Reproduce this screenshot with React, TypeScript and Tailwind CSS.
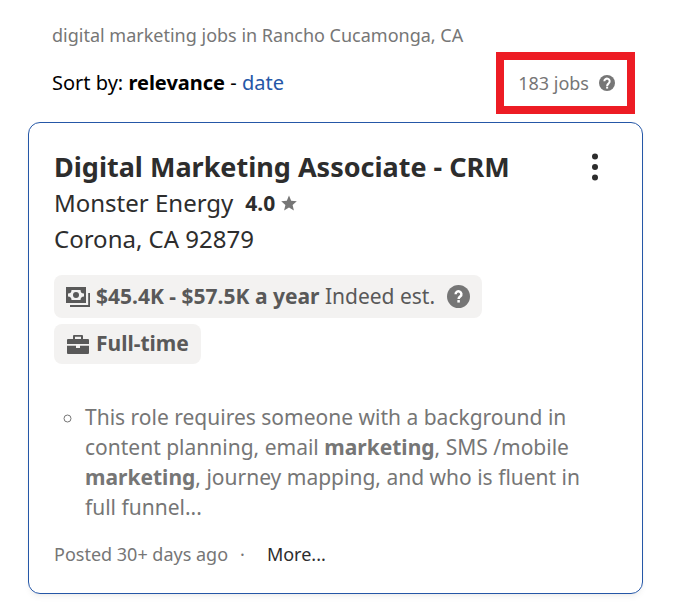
import React from 'react'

const HelpIcon = ({ className, bold = false }: { className: string; bold?: boolean }) => (
    <svg viewBox="0 0 24 24" className={className} aria-hidden="true">
        <circle cx="12" cy="12" r="12" fill="currentColor" />
        {bold ? (
            <g fill="none" stroke="#fff" strokeWidth="3">
                <path d="M8 9.500a4 4 0 1 1 6.600 3c-1.500 1.200-2.400 1.900-2.400 3.900" />
                <path d="M12.200 17.400v3" />
            </g>
        ) : (
            <g fill="none" stroke="#fff" strokeWidth="2.600">
                <path d="M9 9.600a3 3 0 1 1 5 2.200c-1.200.9-1.900 1.400-1.900 2.900" />
                <path d="M12.100 15.700v2.600" />
            </g>
        )}
    </svg>
)

const StarIcon = () => (
    <svg viewBox="0 0 16 16" className="size-4 text-[#767676]" fill="currentColor" aria-hidden="true">
        <path d="M8 .5l2.200 5.200 5.600.5-4.200 3.800 1.300 5.500L8 12.600l-4.900 2.900L4.400 10 .2 6.200l5.600-.5z" />
    </svg>
)

const MoneyIcon = () => (
    <svg viewBox="0 0 24 20" className="h-5 w-6" fill="currentColor" aria-hidden="true">
        <path fillRule="evenodd" d="M0 0h20v16H0zM5.500 3A3.500 3.500 0 0 1 2 6.500v3A3.500 3.500 0 0 1 5.500 13h9A3.500 3.500 0 0 1 18 9.500v-3A3.500 3.500 0 0 1 14.500 3z" />
        <circle cx="10" cy="8" r="3" />
        <path d="M22.200 6H24v14H4v-2h18.200z" />
    </svg>
)

const BriefcaseIcon = () => (
    <svg viewBox="0 0 24 20" className="h-5 w-6" fill="currentColor" aria-hidden="true">
        <path fillRule="evenodd" d="M7 5V2a1 1 0 0 1 1-1h8a1 1 0 0 1 1 1v3h5a1 1 0 0 1 1 1v4H1V6a1 1 0 0 1 1-1zm2 0h6V2.800H9z" />
        <path d="M1 11.800h9V14h4v-2.200h9V19a1 1 0 0 1-1 1H2a1 1 0 0 1-1-1z" />
    </svg>
)

const MenuIcon = () => (
    <svg viewBox="0 0 8 28" className="h-7 w-2" fill="currentColor" aria-hidden="true">
        <circle cx="4" cy="3.500" r="3" />
        <circle cx="4" cy="14" r="3" />
        <circle cx="4" cy="24.500" r="3" />
    </svg>
)

const ResultsHeader = () => (
    <header className="px-6">
        <h1 className="text-lg leading-6 text-[#767676]">digital marketing jobs in Rancho Cucamonga, CA</h1>
        <div className="mt-[5px] flex items-center justify-between">
            <p className="text-xl leading-7 text-black">
                Sort by: <b>relevance</b> - <a href="#date" className="text-[#2557a7]">date</a>
            </p>
            <div className="-mr-4 flex items-center gap-2.5 border-8 border-[#ed1c24] py-2 pr-3 pl-[14px] text-lg leading-[30px] text-[#767676]">
                <span>183 jobs</span>
                <button type="button" aria-label="About the job count">
                    <HelpIcon className="size-4" bold />
                </button>
            </div>
        </div>
    </header>
)

const JobCard = () => (
    <article className="mt-2 rounded-xl border border-[#2557a7] px-[25px] pt-[26px] pb-6 text-[#2d2d2d] shadow-md shadow-black/5">
        <div className="flex items-start justify-between">
            <h2 className="text-[27px] leading-9 font-bold">Digital Marketing Associate - CRM</h2>
            <button type="button" aria-label="Job actions" className="mr-[18px] pt-1">
                <MenuIcon />
            </button>
        </div>
        <div className="flex items-center text-2xl leading-9">
            <span>Monster Energy</span>
            <span className="mr-1.5 ml-3 text-[21px] font-bold">4.0</span>
            <StarIcon />
        </div>
        <p className="text-2xl leading-9">Corona, CA 92879</p>

        <div className="mt-[18px] flex flex-col items-start gap-1.5 text-[21px] leading-[31px] text-[#595959]">
            <div className="flex items-center rounded-lg bg-[#f3f2f1] px-3 py-1.5">
                <MoneyIcon />
                <span className="ml-1.5"><b>$45.4K - $57.5K a year</b> Indeed est.</span>
                <button type="button" aria-label="About this estimate" className="ml-3 text-[#767676]">
                    <HelpIcon className="size-[23px]" />
                </button>
            </div>
            <div className="flex items-center rounded-lg bg-[#f3f2f1] px-3 pt-1 pb-[5px]">
                <BriefcaseIcon />
                <b className="ml-1.5">Full-time</b>
            </div>
        </div>

        <ul className="mt-[38px] list-[circle] pr-6 pl-[31px] text-[21px] leading-[30px] text-[#767676]">
            <li>
                This role requires someone with a background in content planning, email <b>marketing</b>, SMS /mobile <b>marketing</b>, journey mapping, and who is fluent in full funnel...
            </li>
        </ul>

        <div className="mt-[17px] flex items-center text-lg leading-[30px] text-[#767676]">
            <span>Posted 30+ days ago</span>
            <span className="ml-3">·</span>
            <button type="button" className="ml-[22px] text-[#2d2d2d]">More...</button>
        </div>
    </article>
)

export default function App() {
    return (
        <main className="bg-white pt-[23px] pr-[31px] pb-2 pl-7 font-['Noto_Sans',sans-serif]">
            <ResultsHeader />
            <JobCard />
        </main>
    )
}
